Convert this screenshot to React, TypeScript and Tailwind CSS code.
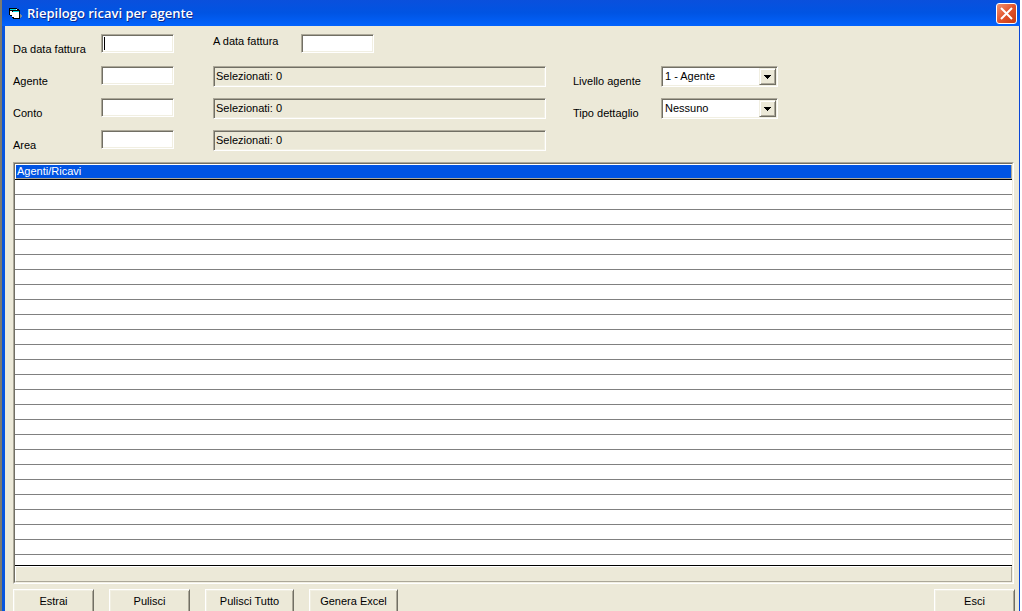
import type { ReactNode } from "react";

const sunken =
  "border border-t-[#aca899] border-l-[#aca899] border-r-white border-b-white shadow-[inset_1px_1px_0_#716f64,inset_-1px_-1px_0_#f1efe2]";

function Field({ id, label, className = "pt-[9px]", focused = false }: { id: string; label: string; className?: string; focused?: boolean }) {
  return (
    <div className="flex h-8 items-start">
      <label htmlFor={id} className={`w-[88px] shrink-0 ${className}`}>
        {label}
      </label>
      <div className="relative">
        <input
          id={id}
          type="text"
          autoFocus={focused}
          className={`block h-[19px] w-[73px] bg-white px-0.5 caret-transparent outline-none ${sunken}`}
        />
        {focused && <span className="pointer-events-none absolute top-[3px] left-[3px] h-[13px] w-px bg-black" />}
      </div>
    </div>
  );
}

function Selected() {
  return (
    <div className="h-8">
      <output className={`block h-[21px] px-0.5 leading-[19px] ${sunken}`}>Selezionati: 0</output>
    </div>
  );
}

function Dropdown({ id, label, options }: { id: string; label: string; options: string[] }) {
  return (
    <div className="flex h-8 items-start">
      <label htmlFor={id} className="w-[88px] shrink-0 pt-[9px]">
        {label}
      </label>
      <div className="relative">
        <select
          id={id}
          className={`block h-[21px] w-[117px] appearance-none bg-white pl-[3px] leading-[19px] outline-none ${sunken}`}
        >
          {options.map((o) => (
            <option key={o}>{o}</option>
          ))}
        </select>
        <span className="pointer-events-none absolute top-0.5 right-0.5 grid h-[17px] w-[17px] place-items-center border border-t-[#f1efe2] border-l-[#f1efe2] border-r-[#716f64] border-b-[#716f64] bg-[#ece9d8] shadow-[inset_1px_1px_0_#fff,inset_-1px_-1px_0_#aca899]">
          <svg width="7" height="4" shapeRendering="crispEdges">
            <path d="M0 0h7v1H0zM1 1h5v1H1zM2 2h3v1H2zM3 3h1v1H3z" />
          </svg>
        </span>
      </div>
    </div>
  );
}

function Button({ className, children }: { className: string; children: ReactNode }) {
  return (
    <button
      type="button"
      className={`h-6 shrink-0 border border-t-white border-l-white border-r-[#716f64] border-b-[#716f64] shadow-[inset_1px_1px_0_#f1efe2,inset_-1px_-1px_0_#aca899] ${className}`}
    >
      {children}
    </button>
  );
}

const rows = Array.from({ length: 25 }, (_, i) => i);

export default function App() {
  return (
    <div className="h-screen overflow-hidden border-r-2 border-l-2 border-r-white border-l-[#7d7b70] bg-[#ece9d8] font-['Liberation_Sans',sans-serif] text-[11px] leading-[13px] text-black">
      <div className="flex h-full flex-col">
        <header className="flex h-[26px] shrink-0 items-center justify-between bg-linear-to-b from-[#0a50dc] via-[#0054e3] to-[#0363fd] pr-[3px] pl-[7px]">
          <div className="flex items-center gap-1">
            <svg width="14" height="13" viewBox="0 0 14 13" shapeRendering="crispEdges">
              <path fill="#7d8794" d="M11 7h1v1h1v2h-1v1h-2V7z" />
              <path fill="#000" d="M0 1h8v1h2v1h1v9H4v-1H3V9H1V8H0z" />
              <path fill="#00e0e8" d="M1 2h6v1H1zM4 4h6v1H4z" />
              <path fill="#fff" d="M1 4h2v4H1zM3 5h7v5H3zM5 10h5v1H5zM7 2h1v1H7z" />
            </svg>
            <h1 className="font-['Open_Sans',sans-serif] text-[13px] leading-5 font-semibold text-white [text-shadow:1px_1px_0_#10298a]">
              Riepilogo ricavi per agente
            </h1>
          </div>
          <button
            type="button"
            aria-label="Chiudi"
            className="grid h-[21px] w-[21px] place-items-center rounded-[3px] border border-white bg-linear-to-br from-[#f0926f] via-[#e2532b] to-[#c53a10]"
          >
            <svg width="13" height="13" viewBox="0 0 13 13" stroke="#fff" strokeWidth="2">
              <path d="M1 1l11 11M12 1L1 12" />
            </svg>
          </button>
        </header>

        <main className="flex min-h-0 flex-1 flex-col border-r border-l-[3px] border-r-[#0a46d5] border-l-[#0855dd] pr-1 pl-2">
          <form className="flex pt-2">
            <div className="w-[200px]">
              <Field id="from" label="Da data fattura" focused />
              <Field id="agent" label="Agente" />
              <Field id="account" label="Conto" />
              <Field id="area" label="Area" />
            </div>
            <div className="w-[333px]">
              <Field id="to" label="A data fattura" className="pt-px" />
              <Selected />
              <Selected />
              <Selected />
            </div>
            <div className="ml-[27px] pt-8">
              <Dropdown id="level" label="Livello agente" options={["1 - Agente"]} />
              <Dropdown id="detail" label="Tipo dettaglio" options={["Nessuno"]} />
            </div>
          </form>

          <section className="mr-px h-[422px] shrink-0 border border-t-[#aca899] border-l-[#aca899] border-r-white border-b-white">
            <div className="flex h-full flex-col border border-t-[#716f64] border-l-[#716f64] border-r-[#f1efe2] border-b-[#f1efe2] bg-white">
              <table className="w-full border-separate border-spacing-0">
                <thead>
                  <tr>
                    <th className="h-4 border-b border-black bg-[#0054e3] p-0 pl-0.5 text-left font-normal text-white shadow-[inset_1px_1px_0_#fff,inset_-1px_-1px_0_#aca899]">
                      Agenti/Ricavi
                    </th>
                  </tr>
                </thead>
                <tbody>
                  {rows.map((r) => (
                    <tr key={r}>
                      <td className="h-[15px] border-b border-[#808080] p-0" />
                    </tr>
                  ))}
                </tbody>
              </table>
              <div className="mt-auto border-t border-black">
                <div className="h-4 border border-t-white border-l-white border-r-[#aca899] border-b-[#aca899] bg-[#ece9d8]" />
              </div>
            </div>
          </section>

          <footer className="mt-[5px] flex">
            <Button className="w-[81px]">Estrai</Button>
            <Button className="ml-[15px] w-[81px]">Pulisci</Button>
            <Button className="ml-[15px] w-[89px]">Pulisci Tutto</Button>
            <Button className="ml-[15px] w-[89px]">Genera Excel</Button>
            <Button className="ml-auto w-[81px]">Esci</Button>
          </footer>
        </main>
      </div>
    </div>
  );
}
